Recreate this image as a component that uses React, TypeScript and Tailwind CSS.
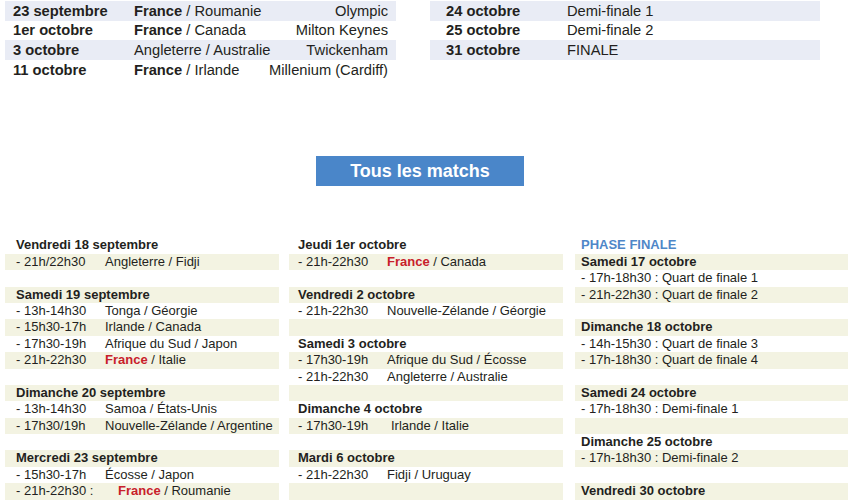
import type { ReactNode } from 'react'

type Row = { head?: string; time?: string; match?: ReactNode; line?: ReactNode; phase?: boolean; shift?: boolean; wide?: boolean }

const Fr = () => <span className="font-bold text-[#c8202a]">France</span>

const left: Row[] = [
  { head: 'Vendredi 18 septembre' },
  { time: '- 21h/22h30', match: 'Angleterre / Fidji' },
  {},
  { head: 'Samedi 19 septembre' },
  { time: '- 13h-14h30', match: 'Tonga / Géorgie' },
  { time: '- 15h30-17h', match: 'Irlande / Canada' },
  { time: '- 17h30-19h', match: 'Afrique du Sud / Japon' },
  { time: '- 21h-22h30', match: <><Fr /> / Italie</> },
  {},
  { head: 'Dimanche 20 septembre' },
  { time: '- 13h-14h30', match: 'Samoa / États-Unis' },
  { time: '- 17h30/19h', match: 'Nouvelle-Zélande / Argentine' },
  {},
  { head: 'Mercredi 23 septembre' },
  { time: '- 15h30-17h', match: 'Écosse / Japon' },
  { time: '- 21h-22h30 :', match: <><Fr /> / Roumanie</>, wide: true },
]

const middle: Row[] = [
  { head: 'Jeudi 1er octobre' },
  { time: '- 21h-22h30', match: <><Fr /> / Canada</> },
  {},
  { head: 'Vendredi 2 octobre' },
  { time: '- 21h-22h30', match: 'Nouvelle-Zélande / Géorgie' },
  {},
  { head: 'Samedi 3 octobre' },
  { time: '- 17h30-19h', match: 'Afrique du Sud / Écosse' },
  { time: '- 21h-22h30', match: 'Angleterre / Australie' },
  {},
  { head: 'Dimanche 4 octobre' },
  { time: '- 17h30-19h', match: 'Irlande / Italie', shift: true },
  {},
  { head: 'Mardi 6 octobre' },
  { time: '- 21h-22h30', match: 'Fidji / Uruguay' },
  {},
]

const right: Row[] = [
  { head: 'PHASE FINALE', phase: true },
  { head: 'Samedi 17 octobre' },
  { line: '- 17h-18h30 : Quart de finale 1' },
  { line: '- 21h-22h30 : Quart de finale 2' },
  {},
  { head: 'Dimanche 18 octobre' },
  { line: '- 14h-15h30 : Quart de finale 3' },
  { line: '- 17h-18h30 : Quart de finale 4' },
  {},
  { head: 'Samedi 24 octobre' },
  { line: '- 17h-18h30 : Demi-finale 1' },
  {},
  { head: 'Dimanche 25 octobre' },
  { line: '- 17h-18h30 : Demi-finale 2' },
  {},
  { head: 'Vendredi 30 octobre' },
]

function Column({ rows, className, pad }: { rows: Row[]; className: string; pad: string }) {
  return (
    <div className={'flex flex-col ' + className}>
      {rows.map((r, i) => (
        <div
          key={i}
          className={'flex h-[16.4px] items-center whitespace-nowrap leading-[16.4px] ' + pad + ' ' + (i % 2 === 1 ? 'bg-[#f3f3e2]' : '')}
        >
          {r.head && (
            <span className={'font-bold ' + (r.phase ? 'text-[#4f87c8]' : '')}>{r.head}</span>
          )}
          {r.time && (
            <>
              <span className={'shrink-0 ' + (r.wide ? 'w-[102px]' : 'w-[89px]')}>{r.time}</span>
              <span className={r.shift ? 'ml-[4px]' : ''}>{r.match}</span>
            </>
          )}
          {r.line && <span>{r.line}</span>}
        </div>
      ))}
    </div>
  )
}

const topLeft = [
  { date: '23 septembre', match: <><b>France</b> / Roumanie</>, venue: 'Olympic' },
  { date: '1er octobre', match: <><b>France</b> / Canada</>, venue: 'Milton Keynes' },
  { date: '3 octobre', match: 'Angleterre / Australie', venue: 'Twickenham' },
  { date: '11 octobre', match: <><b>France</b> / Irlande</>, venue: 'Millenium (Cardiff)' },
]

const topRight = [
  { date: '24 octobre', what: 'Demi-finale 1' },
  { date: '25 octobre', what: 'Demi-finale 2' },
  { date: '31 octobre', what: 'FINALE' },
]

export default function App() {
  return (
    <div className="h-[500px] w-[848px] overflow-hidden bg-white font-['Liberation_Sans',Arial,sans-serif] text-[#231f20]">
      <div className="flex pt-[1px] text-[14.7px]">
        <div className="ml-[5px] flex w-[391px] flex-col">
          {topLeft.map((r, i) => (
            <div key={i} className={'flex h-[19.6px] items-center whitespace-nowrap px-[8px] ' + (i % 2 === 0 ? 'bg-[#e9ecf5]' : '')}>
              <span className="w-[121px] shrink-0 font-bold">{r.date}</span>
              <span>{r.match}</span>
              <span className="ml-auto">{r.venue}</span>
            </div>
          ))}
        </div>
        <div className="ml-[34px] flex w-[390px] flex-col">
          {topRight.map((r, i) => (
            <div key={i} className={'flex h-[19.6px] items-center whitespace-nowrap pl-[16px] ' + (i % 2 === 0 ? 'bg-[#e9ecf5]' : '')}>
              <span className="w-[121px] shrink-0 font-bold">{r.date}</span>
              <span>{r.what}</span>
            </div>
          ))}
        </div>
      </div>

      <div className="ml-[316px] mt-[77px] flex h-[30px] w-[208px] items-center justify-center bg-[#4a86c9] text-[18px] font-bold text-white">
        Tous les matchs
      </div>

      <div className="mt-[51px] flex text-[13px]">
        <Column rows={left} className="ml-[5px] w-[274px]" pad="pl-[11px]" />
        <Column rows={middle} className="ml-[10px] w-[274px]" pad="pl-[9px]" />
        <Column rows={right} className="ml-[12px] w-[273px]" pad="pl-[6px]" />
      </div>
    </div>
  )
}
